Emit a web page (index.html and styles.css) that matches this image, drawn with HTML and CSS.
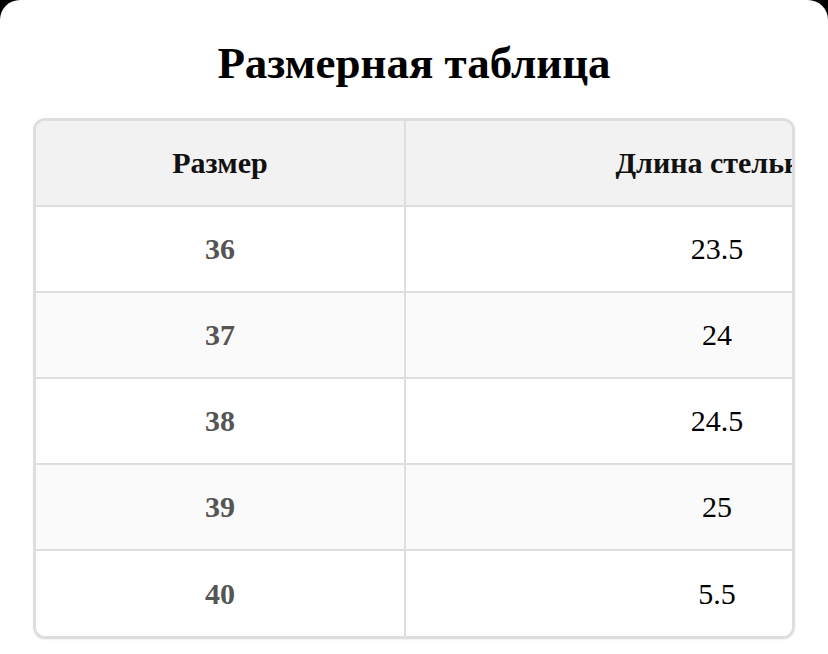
FILE: index.html
```html
<!DOCTYPE html>
<html lang="ru">
<head>
<meta charset="utf-8">
<title>Размерная таблица</title>
<link rel="stylesheet" href="styles.css">
</head>
<body>
<div class="sheet">
  <h1 class="title">Размерная таблица</h1>
  <div class="table-wrap">
    <div class="row head">
      <div class="cell">Размер</div>
      <div class="cell">Длина стельки</div>
    </div>
    <div class="row">
      <div class="cell size">36</div>
      <div class="cell len">23.5</div>
    </div>
    <div class="row alt">
      <div class="cell size">37</div>
      <div class="cell len">24</div>
    </div>
    <div class="row">
      <div class="cell size">38</div>
      <div class="cell len">24.5</div>
    </div>
    <div class="row alt">
      <div class="cell size">39</div>
      <div class="cell len">25</div>
    </div>
    <div class="row last">
      <div class="cell size">40</div>
      <div class="cell len">5.5</div>
    </div>
  </div>
</div>
</body>
</html>
```
FILE: styles.css
```css
html, body {
  margin: 0;
  padding: 0;
  background: #000;
}

.sheet {
  background: #fff;
  height: 654px;
  border-radius: 20px 20px 0 0;
  padding-top: 37px;
  box-sizing: border-box;
  font-family: "Liberation Serif", "Times New Roman", serif;
  overflow: hidden;
}

.title {
  margin: 0 0 29px;
  text-align: center;
  font-size: 45px;
  line-height: 52px;
  font-weight: bold;
  color: #000;
}

.table-wrap {
  margin: 0 33px;
  border: 3px solid #dedede;
  border-radius: 12px;
  overflow: hidden;
  box-shadow: 0 1px 2px rgba(0,0,0,0.06);
}

.row {
  display: grid;
  grid-template-columns: 370px 622px;
  height: 86px;
  border-bottom: 2px solid #dedede;
  box-sizing: border-box;
  background: #fff;
}

.row.head {
  height: 86px;
  background: #f2f2f2;
}

.row.alt {
  background: #fafafa;
}

.row.last {
  border-bottom: none;
  height: 85px;
}

.cell {
  display: flex;
  align-items: center;
  justify-content: center;
  font-size: 30px;
  white-space: nowrap;
}

.cell:first-child {
  border-right: 2px solid #dedede;
}

.head .cell {
  font-weight: bold;
  color: #111;
}

.size {
  font-weight: bold;
  color: #555;
}

.len {
  color: #000;
}
```
